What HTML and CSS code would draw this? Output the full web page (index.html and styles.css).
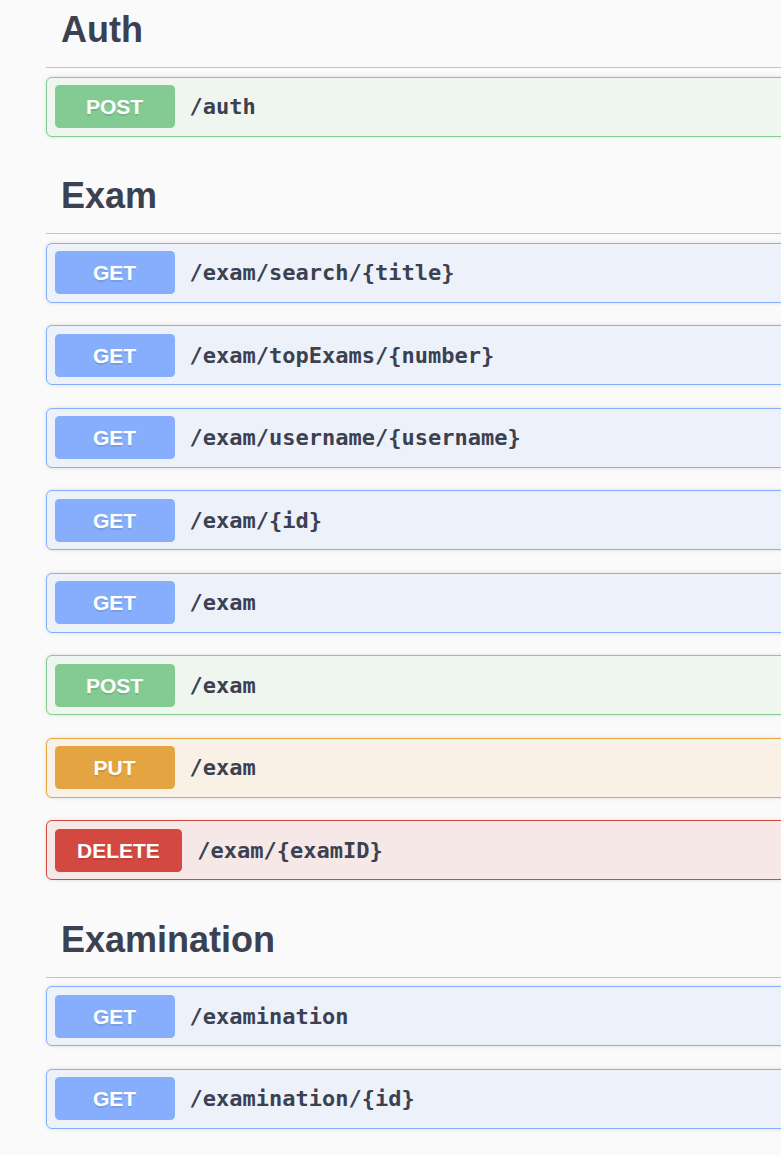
FILE: index.html
```html
<!DOCTYPE html>
<html>
<head>
<meta charset="utf-8">
<link rel="stylesheet" href="styles.css">
</head>
<body>
<div class="page">
  <section class="tag-section first">
    <h4 class="tag">Auth</h4>
    <div class="op post"><span class="method">POST</span><span class="path">/auth</span></div>
  </section>
  <section class="tag-section">
    <h4 class="tag">Exam</h4>
    <div class="op get"><span class="method">GET</span><span class="path">/exam/search/{title}</span></div>
    <div class="op get"><span class="method">GET</span><span class="path">/exam/topExams/{number}</span></div>
    <div class="op get"><span class="method">GET</span><span class="path">/exam/username/{username}</span></div>
    <div class="op get"><span class="method">GET</span><span class="path">/exam/{id}</span></div>
    <div class="op get"><span class="method">GET</span><span class="path">/exam</span></div>
    <div class="op post"><span class="method">POST</span><span class="path">/exam</span></div>
    <div class="op put"><span class="method">PUT</span><span class="path">/exam</span></div>
    <div class="op delete"><span class="method">DELETE</span><span class="path">/exam/{examID}</span></div>
  </section>
  <section class="tag-section">
    <h4 class="tag">Examination</h4>
    <div class="op get"><span class="method">GET</span><span class="path">/examination</span></div>
    <div class="op get"><span class="method">GET</span><span class="path">/examination/{id}</span></div>
  </section>
</div>
</body>
</html>
```
FILE: styles.css
```css
html, body {
  margin: 0;
  padding: 0;
  background: #fafafa;
  overflow: hidden;
}
.page {
  width: 1100px;
  padding-left: 46px;
  margin-top: -7px;
  font-family: "Liberation Sans", Arial, sans-serif;
  color: #3b4151;
}
.tag-section {
  display: flex;
  flex-direction: column;
}
.tag {
  margin: 0 0 8.5px;
  padding: 15px 15px 15px 15px;
  font-size: 36px;
  line-height: 44px;
  font-weight: 700;
  color: #3b4151;
  border-bottom: 1px solid rgba(59, 65, 81, 0.3);
}
.op {
  display: flex;
  align-items: center;
  margin: 0 0 22.5px;
  padding: 7.5px;
  border: 1px solid;
  border-radius: 6px;
  box-shadow: 0 0 4.5px rgba(0, 0, 0, 0.12);
}
.method {
  box-sizing: border-box;
  min-width: 120px;
  padding: 9px 22.5px;
  border-radius: 4.5px;
  text-align: center;
  color: #fff;
  font-size: 21px;
  line-height: 25px;
  font-weight: 700;
  text-shadow: 0 1.5px 0 rgba(0, 0, 0, 0.1);
}
.path {
  padding: 0 15px;
  font-family: "DejaVu Sans Mono", monospace;
  font-weight: 700;
  font-size: 22px;
  color: #3b4151;
}
.post { background: #eef6ef; border-color: #84cb93; }
.post .method { background: #84cb93; }
.get { background: #edf1fa; border-color: #86aefc; }
.get .method { background: #86aefc; }
.put { background: #f9f1e6; border-color: #e3a441; }
.put .method { background: #e3a441; }
.delete { background: #f6e8e7; border-color: #d44842; }
.delete .method { background: #d44842; }
```
